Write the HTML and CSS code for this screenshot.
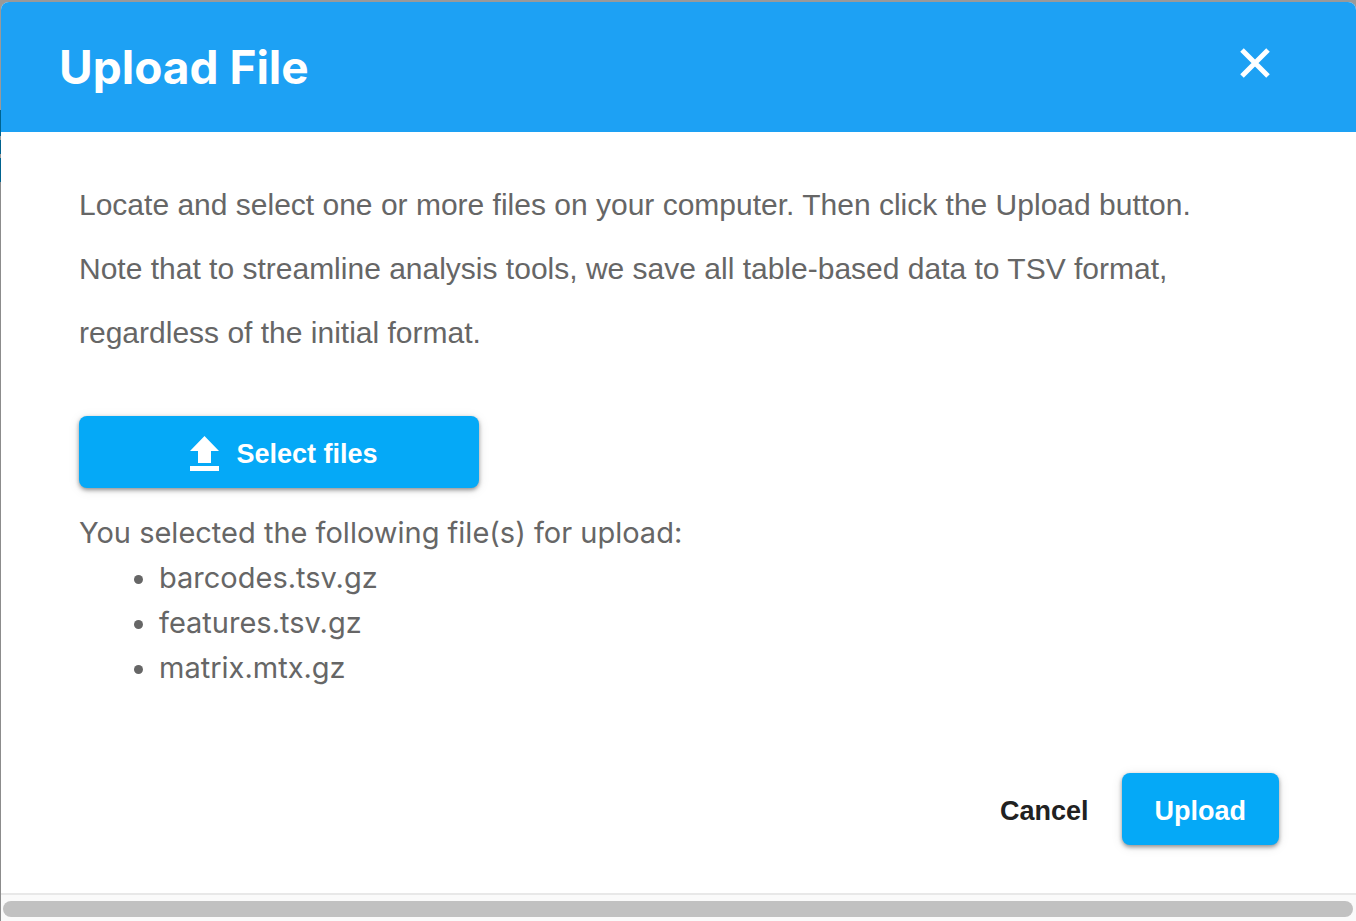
FILE: index.html
```html
<!DOCTYPE html>
<html lang="en">
<head>
<meta charset="utf-8">
<meta name="viewport" content="width=device-width, initial-scale=1">
<title>Upload File</title>
<link rel="stylesheet" href="styles.css">
</head>
<body class="backdrop">
<main class="dialog" role="dialog" aria-labelledby="dialog-title">
  <header class="dialog-header">
    <h1 class="dialog-title" id="dialog-title">Upload File</h1>
    <button class="close-button" type="button" aria-label="Close">
      <svg class="close-icon" viewBox="0 0 30 30" aria-hidden="true"><path d="M2 2 28 28M28 2 2 28" fill="none" stroke="#fff" stroke-width="5"/></svg>
    </button>
  </header>
  <div class="dialog-body">
    <p class="intro">Locate and select one or more files on your computer. Then click the Upload button. Note that to streamline analysis tools, we save all table-based data to TSV format, regardless of the initial format.</p>
    <button class="button button-primary button-select" type="button">
      <svg class="upload-icon" viewBox="0 0 29 35" aria-hidden="true"><path d="M14.500 0 29 15H21V27H8V15H0ZM0 30H29V35H0Z" fill="#fff"/></svg>
      <span>Select files</span>
    </button>
    <section class="selection">
      <p class="selection-label">You selected the following file(s) for upload:</p>
      <ul class="file-list">
        <li>barcodes.tsv.gz</li>
        <li>features.tsv.gz</li>
        <li>matrix.mtx.gz</li>
      </ul>
    </section>
    <div class="actions">
      <button class="button button-plain" type="button">Cancel</button>
      <button class="button button-primary" type="button">Upload</button>
    </div>
  </div>
  <div class="scroll-track"><div class="scroll-thumb"></div></div>
</main>
</body>
</html>
```
FILE: styles.css
```css
* {
  box-sizing: border-box;
}

.backdrop {
  display: flex;
  min-height: 100vh;
  margin: 0;
  padding: 2px 0 0 1px;
  background: linear-gradient(#999 110px, #00638f 110px 136px, #999 136px 140px, #00638f 140px 154px, #999 154px 158px, #00638f 158px 182px, #8c8c8c 182px);
  font-family: "Liberation Sans", Arial, sans-serif;
  color: #666;
}

.dialog {
  display: flex;
  flex: 1;
  flex-direction: column;
  min-width: 0;
  overflow: hidden;
  border-radius: 8px 8px 0 0;
  background: #fff;
}

.dialog-header {
  display: flex;
  align-items: flex-start;
  justify-content: space-between;
  padding: 36px 86px 36px 58px;
  background: #1da1f4;
  color: #fff;
}

.dialog-title {
  margin: 0;
  font: 700 46px/58px Inter, sans-serif;
}

.close-button {
  display: flex;
  margin: 10px 0 0;
  padding: 0;
  border: 0;
  background: none;
}

.close-icon {
  width: 30px;
  height: 30px;
}

.dialog-body {
  display: flex;
  flex: 1;
  flex-direction: column;
  padding: 41px 77px 48px 78px;
}

.intro {
  margin: 0 0 51px;
  padding-right: 60px;
  font-size: 30px;
  line-height: 64px;
}

.button {
  display: flex;
  align-items: center;
  justify-content: center;
  height: 72px;
  padding: 3px 33px 0;
  border: 0;
  border-radius: 8px;
  font: 700 27px/36px "Liberation Sans", Arial, sans-serif;
}

.button-primary {
  background: #05a9f7;
  box-shadow: 0 2px 4px rgba(0, 0, 0, 0.4), 0 2px 12px rgba(0, 0, 0, 0.1);
  color: #fff;
}

.button-select {
  gap: 17px;
  width: 400px;
  max-width: 100%;
  padding-left: 43px;
}

.upload-icon {
  width: 29px;
  height: 35px;
}

.button-plain {
  background: none;
  color: #212121;
}

.selection {
  margin-top: 22px;
  font: 400 29px/45px Inter, sans-serif;
}

.selection-label {
  margin: 0;
}

.file-list {
  margin: 0;
  padding-left: 80px;
}

.actions {
  display: flex;
  justify-content: flex-end;
  margin-top: auto;
}

.scroll-track {
  padding: 6px 3px 4px 2px;
  border-top: 2px solid #e8e8e8;
  background: #fafafa;
}

.scroll-thumb {
  height: 16px;
  border-radius: 8px;
  background: #c1c1c1;
}
```
